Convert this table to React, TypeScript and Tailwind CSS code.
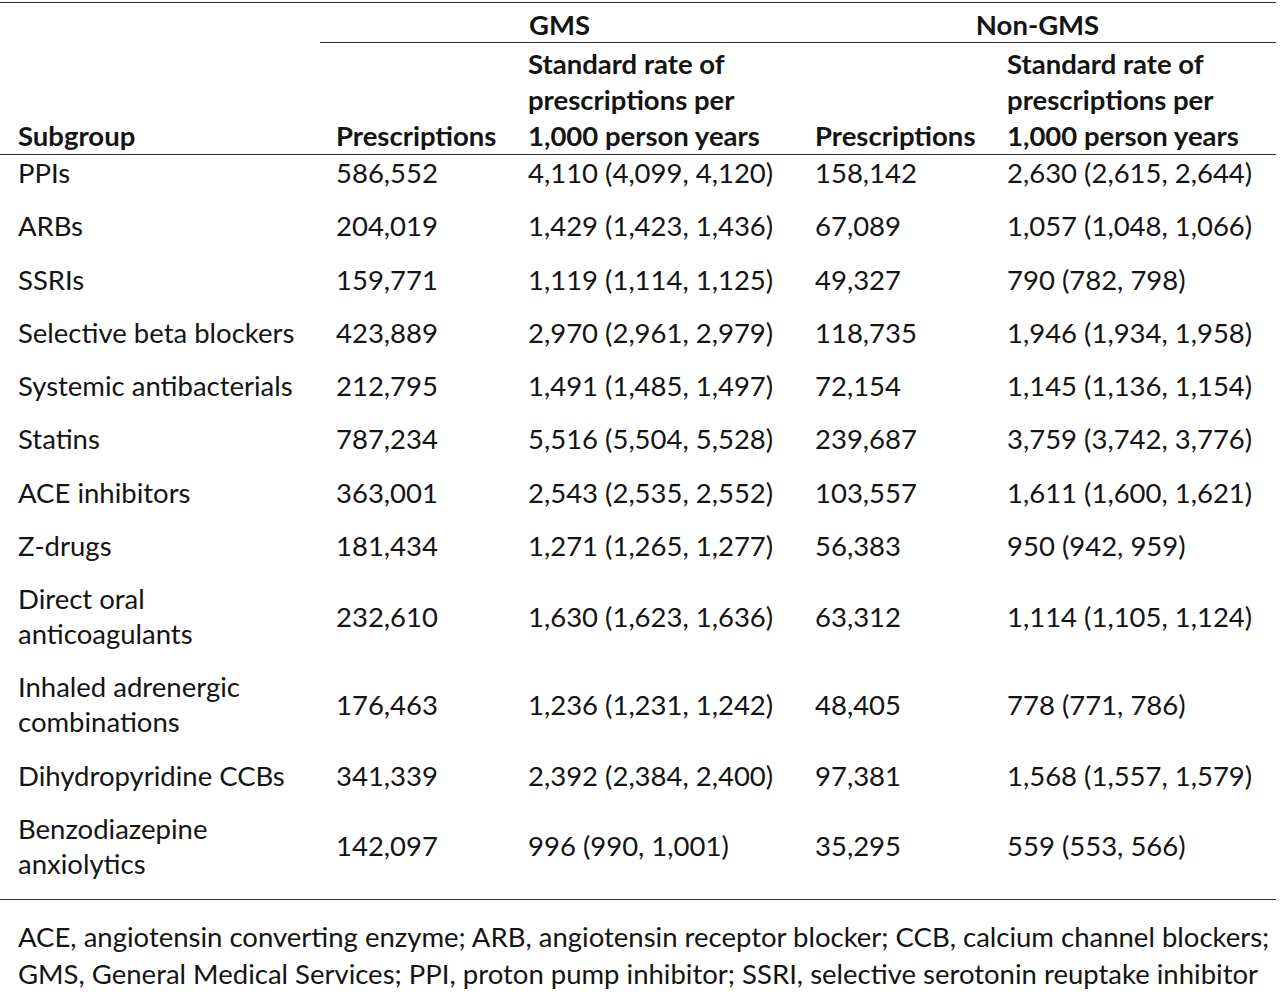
export default function App() {
  const rows: [string[], string, string, string, string][] = [
    [["PPIs"], "586,552", "4,110 (4,099, 4,120)", "158,142", "2,630 (2,615, 2,644)"],
    [["ARBs"], "204,019", "1,429 (1,423, 1,436)", "67,089", "1,057 (1,048, 1,066)"],
    [["SSRIs"], "159,771", "1,119 (1,114, 1,125)", "49,327", "790 (782, 798)"],
    [["Selective beta blockers"], "423,889", "2,970 (2,961, 2,979)", "118,735", "1,946 (1,934, 1,958)"],
    [["Systemic antibacterials"], "212,795", "1,491 (1,485, 1,497)", "72,154", "1,145 (1,136, 1,154)"],
    [["Statins"], "787,234", "5,516 (5,504, 5,528)", "239,687", "3,759 (3,742, 3,776)"],
    [["ACE inhibitors"], "363,001", "2,543 (2,535, 2,552)", "103,557", "1,611 (1,600, 1,621)"],
    [["Z-drugs"], "181,434", "1,271 (1,265, 1,277)", "56,383", "950 (942, 959)"],
    [["Direct oral", "anticoagulants"], "232,610", "1,630 (1,623, 1,636)", "63,312", "1,114 (1,105, 1,124)"],
    [["Inhaled adrenergic", "combinations"], "176,463", "1,236 (1,231, 1,242)", "48,405", "778 (771, 786)"],
    [["Dihydropyridine CCBs"], "341,339", "2,392 (2,384, 2,400)", "97,381", "1,568 (1,557, 1,579)"],
    [["Benzodiazepine", "anxiolytics"], "142,097", "996 (990, 1,001)", "35,295", "559 (553, 566)"],
  ]

  const cell = "pl-4 pt-0 pb-[18.25px] align-middle whitespace-nowrap"

  return (
    <div className="w-[1280px] h-[992px] bg-white text-[#141414] font-['Lato','Liberation_Sans',sans-serif] text-[27.5px] overflow-hidden">
      <table className="mt-[2px] w-[1276px] border-collapse table-fixed">
        <colgroup>
          <col className="w-[320px]" />
          <col className="w-[192px]" />
          <col className="w-[287px]" />
          <col className="w-[192px]" />
          <col className="w-[285px]" />
        </colgroup>
        <thead className="font-bold">
          <tr className="border-t border-[#333] leading-[35px]">
            <th></th>
            <th colSpan={2} className="pt-[4px] text-center font-bold border-b border-[#333]">
              GMS
            </th>
            <th colSpan={2} className="pt-[4px] text-center font-bold border-b border-[#333]">
              Non-GMS
            </th>
          </tr>
          <tr className="border-b border-[#333] leading-[36px] text-left">
            <th className="pl-[18px] pt-[3px] align-bottom font-bold">Subgroup</th>
            <th className="pl-4 pt-[3px] align-bottom font-bold">Prescriptions</th>
            <th className="pl-4 pt-[3px] align-bottom font-bold whitespace-nowrap">
              Standard rate of
              <br />
              prescriptions per
              <br />
              1,000 person years
            </th>
            <th className="pl-4 pt-[3px] align-bottom font-bold">Prescriptions</th>
            <th className="pl-4 pt-[3px] align-bottom font-bold whitespace-nowrap">
              Standard rate of
              <br />
              prescriptions per
              <br />
              1,000 person years
            </th>
          </tr>
        </thead>
        <tbody className="leading-[35px]">
          {rows.map(([name, p1, r1, p2, r2], i) => (
            <tr key={i} className={i === rows.length - 1 ? "border-b border-[#333]" : ""}>
              <td className="pl-[18px] pt-0 pb-[18.25px] align-middle whitespace-nowrap">
                {name.map((n, j) => (
                  <div key={j}>{n}</div>
                ))}
              </td>
              <td className={cell}>{p1}</td>
              <td className={cell}>{r1}</td>
              <td className={cell}>{p2}</td>
              <td className={cell}>{r2}</td>
            </tr>
          ))}
        </tbody>
      </table>
      <p className="pl-[18px] pt-[18px] leading-[37px] whitespace-nowrap">
        ACE, angiotensin converting enzyme; ARB, angiotensin receptor blocker; CCB, calcium channel blockers;
        <br />
        GMS, General Medical Services; PPI, proton pump inhibitor; SSRI, selective serotonin reuptake inhibitor
      </p>
    </div>
  )
}
